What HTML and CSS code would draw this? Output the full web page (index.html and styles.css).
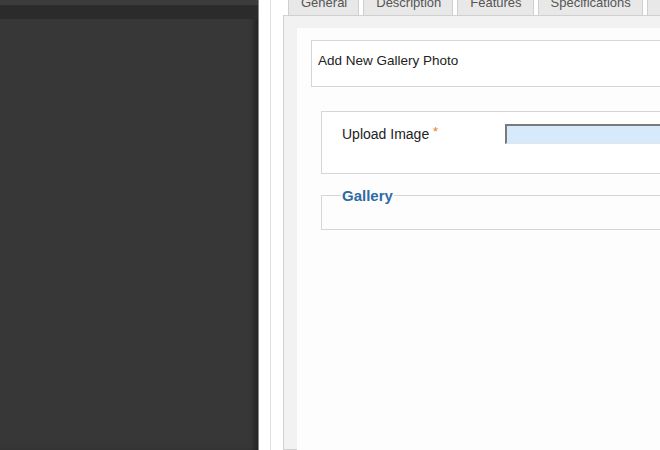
FILE: index.html
```html
<!DOCTYPE html>
<html>
<head>
<meta charset="utf-8">
<link rel="stylesheet" href="styles.css">
</head>
<body>
<div class="sidebar">
  <div class="band-top"></div>
  <div class="band-dark"></div>
</div>
<div class="main">
  <div class="frame">
    <div class="tabs">
      <div class="tab">General</div>
      <div class="tab">Description</div>
      <div class="tab">Features</div>
      <div class="tab">Specifications</div>
      <div class="tab">Images</div>
    </div>
    <div class="panel">
      <div class="content">
        <div class="title-box">Add New Gallery Photo</div>
        <div class="sections">
          <div class="upload-box">
            <label class="field-label">Upload Image <span class="req">*</span></label>
            <div class="file-input"></div>
          </div>
          <fieldset class="gallery">
            <legend class="gallery-legend">Gallery</legend>
          </fieldset>
        </div>
      </div>
    </div>
  </div>
</div>
</body>
</html>
```

FILE: styles.css
```css
html, body {
  margin: 0;
  padding: 0;
}
body {
  display: flex;
  width: 660px;
  height: 450px;
  overflow: hidden;
  font-family: "Liberation Sans", Arial, sans-serif;
  color: #222;
  background: #fff;
}
.sidebar {
  width: 258px;
  flex: none;
  background: #373737;
  border-right: 1px solid #8a8a8a;
  box-shadow: inset -6px 0 5px -2px rgba(0, 0, 0, 0.35);
}
.band-top {
  height: 5px;
  background: #3c3c3c;
}
.band-dark {
  height: 14px;
  background: #2b2b2b;
}
.main {
  flex: 1;
  min-width: 0;
  overflow: hidden;
  padding-left: 11px;
  background: #fff;
}
.frame {
  width: 900px;
  height: 100%;
  border-left: 1px solid #e0e0e0;
  padding-left: 12px;
  display: flex;
  flex-direction: column;
}
.tabs {
  display: flex;
  gap: 4px;
  margin-top: -12px;
  padding-left: 5px;
}
.tab {
  box-sizing: content-box;
  padding: 6px 11px 0 12px;
  border: 1px solid #cfcfcf;
  border-bottom: none;
  background: #e8e8e8;
  color: #555;
  font-size: 13px;
  line-height: 16px;
  height: 20px;
}
.panel {
  flex: 1;
  border: 1px solid #d0d0d0;
  background: #f2f2f2;
  padding: 12px 0 0 13px;
}
.content {
  height: 100%;
  background: #fdfdfd;
  padding: 12px 0 0 14px;
}
.title-box {
  height: 45px;
  border: 1px solid #d6d6d6;
  background: #fff;
  padding-left: 6px;
  font-size: 13.5px;
  line-height: 40px;
}
.sections {
  margin-left: 10px;
  margin-top: 24px;
}
.upload-box {
  display: flex;
  align-items: flex-start;
  border: 1px solid #d6d6d6;
  background: #fff;
  padding: 12px 0 0 20px;
  box-sizing: border-box;
  height: 63px;
}
.field-label {
  width: 163px;
  flex: none;
  font-size: 14px;
  line-height: 20px;
  color: #222;
}
.req {
  color: #f07a1a;
  font-size: 13px;
  position: relative;
  top: -3px;
}
.file-input {
  flex: 1;
  height: 20px;
  box-sizing: border-box;
  border-top: 2px solid #7a7a7a;
  border-left: 2px solid #7a7a7a;
  border-bottom: 1px solid #e4e4e4;
  background: #d6eafb;
}
.gallery {
  margin: 13px 0 0;
  padding: 0 0 25px 20px;
  border: 1px solid #d6d6d6;
  background: transparent;
  min-width: 0;
}
.gallery-legend {
  padding: 0 1px;
  margin-left: -1px;
  font-size: 15px;
  line-height: 17px;
  font-weight: bold;
  color: #2f6ba3;
}
```
